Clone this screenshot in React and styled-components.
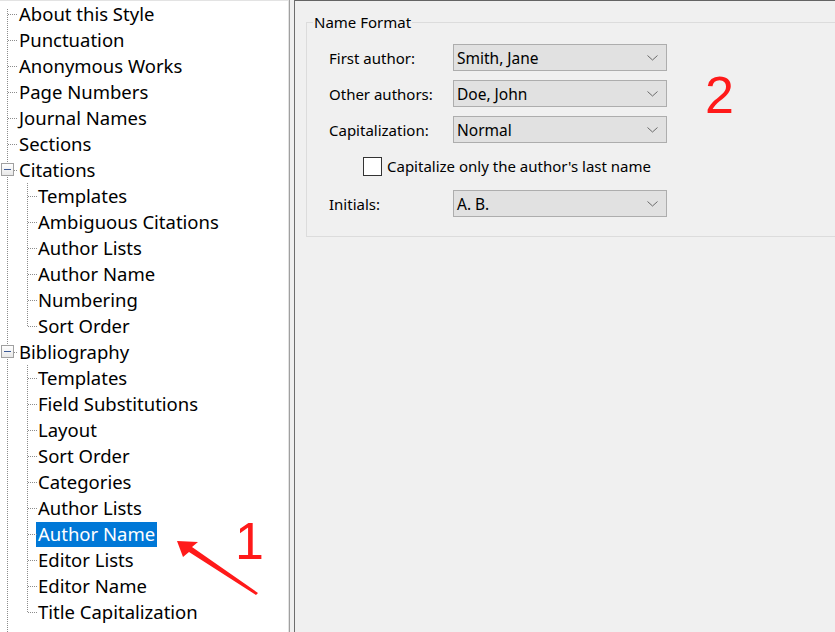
import styled, { createGlobalStyle } from "styled-components";

const GlobalStyle = createGlobalStyle`
  html, body {
    margin: 0;
    padding: 0;
    background: #f0f0f0;
  }
  body {
    font-family: "Noto Sans", "Open Sans", sans-serif;
  }
`;

const Window = styled.div`
  position: relative;
  display: flex;
  width: 835px;
  height: 632px;
  overflow: hidden;
`;

/* ---------- left tree ---------- */

const TreePane = styled.div`
  width: 289px;
  flex: none;
  height: 632px;
  background: #ffffff;
  border-top: 1px solid #e3e3e3;
  border-right: 1px solid #e3e3e3;
  overflow: hidden;
  box-sizing: border-box;
`;

const Tree = styled.div`
  position: relative;
  font-size: 18.5px;
  color: #000;
  &::before {
    content: "";
    position: absolute;
    left: 7px;
    top: 8px;
    bottom: 0;
    width: 1px;
    background-image: linear-gradient(to bottom, #8c8c8c 50%, transparent 50%);
    background-size: 1px 2px;
  }
`;

const Group = styled.div`
  position: relative;
  &::before {
    content: "";
    position: absolute;
    left: 27px;
    top: 0;
    bottom: 13px;
    width: 1px;
    background-image: linear-gradient(to bottom, #8c8c8c 50%, transparent 50%);
    background-size: 1px 2px;
  }
`;

const Row = styled.div`
  position: relative;
  display: flex;
  align-items: center;
  height: 26px;
  padding-left: ${(p) => (p.$level ? 36 : 17)}px;
  white-space: nowrap;
  &::before {
    content: "";
    position: absolute;
    left: ${(p) => (p.$level ? 28 : 8)}px;
    top: 13px;
    width: ${(p) => (p.$level ? 9 : 10)}px;
    height: 1px;
    background-image: linear-gradient(to right, #8c8c8c 50%, transparent 50%);
    background-size: 2px 1px;
  }
`;

const Label = styled.span`
  display: inline-block;
  height: 25px;
  line-height: 24px;
  padding: 0 2px;
  background: ${(p) => (p.$selected ? "#0078d7" : "transparent")};
  color: ${(p) => (p.$selected ? "#ffffff" : "#000000")};
`;

const Expander = styled.span`
  position: absolute;
  left: 1px;
  top: 6px;
  width: 11px;
  height: 11px;
  border: 1px solid #a0a0a0;
  background: linear-gradient(to bottom, #ffffff, #e8e8e8);
  &::after {
    content: "";
    position: absolute;
    left: 2px;
    right: 2px;
    top: 5px;
    height: 1px;
    background: #3c5a96;
  }
`;

const Splitter = styled.div`
  width: 6px;
  flex: none;
  height: 632px;
  box-sizing: border-box;
  background: #f0f0f0;
  border-left: 1px solid #a0a0a0;
  border-right: 1px solid #6d6d6d;
`;

/* ---------- right panel ---------- */

const Panel = styled.div`
  flex: 1;
  height: 632px;
  box-sizing: border-box;
  background: #f0f0f0;
  border-top: 1px solid #646464;
  padding: 11px 0 0 11px;
  overflow: hidden;
  font-size: 15px;
  color: #000;
`;

const GroupBox = styled.fieldset`
  margin: 0 -20px 0 0;
  padding: 12px 0 19px 22px;
  border: 1px solid #dcdcdc;
  min-width: 0;
`;

const Legend = styled.legend`
  padding: 0 1px;
  margin-left: -16px;
  line-height: 20px;
`;

const FormRow = styled.div`
  display: flex;
  align-items: center;
  height: ${(p) => p.$h || 27}px;
  margin-bottom: ${(p) => (p.$gap === undefined ? 9 : p.$gap)}px;
`;

const FieldLabel = styled.span`
  width: 124px;
  flex: none;
`;

const Select = styled.div`
  display: flex;
  align-items: center;
  justify-content: space-between;
  width: 214px;
  height: 27px;
  box-sizing: border-box;
  padding: 0 8px 0 3px;
  background: #e1e1e1;
  border: 1px solid #adadad;
  font-size: 15.5px;
`;

const CheckRow = styled.label`
  display: flex;
  align-items: center;
  gap: 5px;
  padding-left: 34px;
`;

const CheckBox = styled.span`
  width: 19px;
  height: 19px;
  box-sizing: border-box;
  border: 1px solid #333333;
  background: #ffffff;
`;

/* ---------- annotations ---------- */

const Mark = styled.span`
  position: absolute;
  left: ${(p) => p.$x}px;
  top: ${(p) => p.$y}px;
  font-family: "Liberation Sans", Arial, sans-serif;
  font-size: 52px;
  line-height: 1;
  color: #ff1a1a;
`;

const ArrowSvg = styled.svg`
  position: absolute;
  left: 170px;
  top: 535px;
`;

const Chevron = () => (
  <svg width="11" height="6" viewBox="0 0 11 6">
    <polyline points="0.5,0.5 5.5,5 10.5,0.5" fill="none" stroke="#6a6a6a" strokeWidth="1" />
  </svg>
);

const rootItems = [
  "About this Style",
  "Punctuation",
  "Anonymous Works",
  "Page Numbers",
  "Journal Names",
  "Sections",
];

const citations = ["Templates", "Ambiguous Citations", "Author Lists", "Author Name", "Numbering", "Sort Order"];

const bibliography = [
  "Templates",
  "Field Substitutions",
  "Layout",
  "Sort Order",
  "Categories",
  "Author Lists",
  "Author Name",
  "Editor Lists",
  "Editor Name",
  "Title Capitalization",
];

const Parent = ({ label, items, selected }) => (
  <>
    <Row>
      <Expander />
      <Label>{label}</Label>
    </Row>
    <Group>
      {items.map((it, i) => (
        <Row key={i} $level={1}>
          <Label $selected={i === selected}>{it}</Label>
        </Row>
      ))}
    </Group>
  </>
);

const fields = [
  ["First author:", "Smith, Jane"],
  ["Other authors:", "Doe, John"],
  ["Capitalization:", "Normal"],
];

export default function App() {
  return (
    <Window>
      <GlobalStyle />
      <TreePane>
        <Tree>
          {rootItems.map((it) => (
            <Row key={it}>
              <Label>{it}</Label>
            </Row>
          ))}
          <Parent label="Citations" items={citations} />
          <Parent label="Bibliography" items={bibliography} selected={6} />
          <Row>
            <Label>Footnotes</Label>
          </Row>
        </Tree>
      </TreePane>
      <Splitter />
      <Panel>
        <GroupBox>
          <Legend>Name Format</Legend>
          {fields.map(([l, v], i) => (
            <FormRow key={l} $gap={i === 2 ? 8 : 9}>
              <FieldLabel>{l}</FieldLabel>
              <Select>
                <span>{v}</span>
                <Chevron />
              </Select>
            </FormRow>
          ))}
          <FormRow $h={30} $gap={9}>
            <CheckRow>
              <CheckBox />
              <span>Capitalize only the author's last name</span>
            </CheckRow>
          </FormRow>
          <FormRow $gap={0}>
            <FieldLabel>Initials:</FieldLabel>
            <Select>
              <span>A. B.</span>
              <Chevron />
            </Select>
          </FormRow>
        </GroupBox>
      </Panel>

      <Mark $x={705} $y={69}>2</Mark>
      <Mark $x={235} $y={515}>1</Mark>
      <ArrowSvg width="95" height="65" viewBox="0 0 95 65">
        <polygon
          points="7,6 28,7 22,12 88,58 86,60 19,17 13,22"
          fill="#ff1a1a"
        />
      </ArrowSvg>
    </Window>
  );
}
